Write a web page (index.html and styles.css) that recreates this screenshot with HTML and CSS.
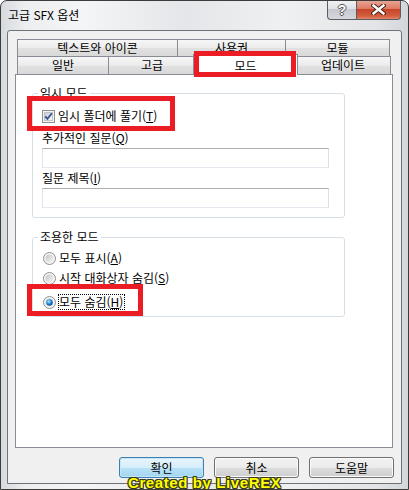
FILE: index.html
```html
<!DOCTYPE html>
<html lang="ko">
<head>
<meta charset="utf-8">
<title>고급 SFX 옵션</title>
<link rel="stylesheet" href="styles.css">
</head>
<body>
<div class="window">
  <div class="titlebar">
    <span class="title">고급 SFX 옵션</span>
    <div class="caption">
      <div class="cap-btn help"><span class="qmark">?</span></div>
      <div class="cap-btn close">
        <svg width="15" height="11" viewBox="0 0 15 11">
          <path d="M2.5 1.5 L12.5 9.5 M12.5 1.5 L2.5 9.5" stroke="#4a2317" stroke-width="4.4" stroke-linecap="square" fill="none"/>
          <path d="M2.5 1.5 L12.5 9.5 M12.5 1.5 L2.5 9.5" stroke="#ffffff" stroke-width="2.4" stroke-linecap="square" fill="none"/>
        </svg>
      </div>
    </div>
  </div>
  <div class="client">
    <div class="tabs">
      <div class="tab-row">
        <div class="tab t-text">텍스트와 아이콘</div>
        <div class="tab t-lic">사용권</div>
        <div class="tab t-mod">모듈</div>
      </div>
      <div class="tab-row row2">
        <div class="tab t-gen">일반</div>
        <div class="tab t-adv">고급</div>
        <div class="tab t-mode sel">모드</div>
        <div class="tab t-upd">업데이트</div>
      </div>
    </div>
    <div class="page">
      <fieldset class="group g1">
        <legend>임시 모드</legend>
        <div class="row check-row">
          <svg class="box" width="13" height="13" viewBox="0 0 13 13">
            <defs><linearGradient id="cbg" x1="0" y1="0" x2="1" y2="1"><stop offset="0" stop-color="#c6cbd2"/><stop offset="1" stop-color="#f7f7f7"/></linearGradient></defs>
            <rect x="0.5" y="0.5" width="12" height="12" fill="#f4f4f4" stroke="#8e8f8f"/>
            <rect x="2.5" y="2.5" width="8" height="8" fill="url(#cbg)" stroke="#bfc4ca"/>
            <path d="M3.2 6.3 L5.4 8.9 L9.9 3.2" fill="none" stroke="#3a5490" stroke-width="1.8"/>
          </svg>
          <span>임시 폴더에 풀기(<u>T</u>)</span>
        </div>
        <div class="row lbl l1">추가적인 질문(<u>Q</u>)</div>
        <div class="input"></div>
        <div class="row lbl l2">질문 제목(<u>I</u>)</div>
        <div class="input"></div>
      </fieldset>
      <fieldset class="group g2">
        <legend>조용한 모드</legend>
        <div class="row radio-row r1">
          <svg class="box" width="13" height="13" viewBox="0 0 13 13">
            <defs><linearGradient id="rg1" x1="0" y1="0" x2="1" y2="1"><stop offset="0" stop-color="#c4c4c4"/><stop offset="1" stop-color="#f6f6f6"/></linearGradient></defs>
            <circle cx="6.5" cy="6.5" r="6" fill="#f5f5f5" stroke="#8e8f8f"/>
            <circle cx="6.5" cy="6.5" r="4" fill="url(#rg1)"/>
          </svg>
          <span>모두 표시(<u>A</u>)</span>
        </div>
        <div class="row radio-row r2">
          <svg class="box" width="13" height="13" viewBox="0 0 13 13">
            <defs><linearGradient id="rg2" x1="0" y1="0" x2="1" y2="1"><stop offset="0" stop-color="#c4c4c4"/><stop offset="1" stop-color="#f6f6f6"/></linearGradient></defs>
            <circle cx="6.5" cy="6.5" r="6" fill="#f5f5f5" stroke="#8e8f8f"/>
            <circle cx="6.5" cy="6.5" r="4" fill="url(#rg2)"/>
          </svg>
          <span>시작 대화상자 숨김(<u>S</u>)</span>
        </div>
        <div class="row radio-row r3">
          <svg class="box" width="13" height="13" viewBox="0 0 13 13">
            <defs>
              <linearGradient id="rg3" x1="0" y1="0" x2="1" y2="1"><stop offset="0" stop-color="#c4c4c4"/><stop offset="1" stop-color="#f6f6f6"/></linearGradient>
              <radialGradient id="rd3" cx="0.4" cy="0.35" r="0.7"><stop offset="0" stop-color="#b4efff"/><stop offset="0.5" stop-color="#2b8fe2"/><stop offset="1" stop-color="#0d3c7c"/></radialGradient>
            </defs>
            <circle cx="6.5" cy="6.5" r="6" fill="#f5f5f5" stroke="#8e8f8f"/>
            <circle cx="6.5" cy="6.5" r="4" fill="url(#rg3)"/>
            <circle cx="6.5" cy="6.5" r="3.2" fill="url(#rd3)"/>
          </svg>
          <span class="focus">모두 숨김(<u>H</u>)</span>
        </div>
      </fieldset>
    </div>
    <div class="buttons">
      <div class="btn default">확인</div>
      <div class="btn">취소</div>
      <div class="btn">도움말</div>
    </div>
  </div>
  <div class="mark m-tab"></div>
  <div class="mark m-check"></div>
  <div class="mark m-radio"></div>
  <div class="watermark">Created by LiveREX</div>
</div>
</body>
</html>
```
FILE: styles.css
```css
* { box-sizing: border-box; }
html, body { margin: 0; padding: 0; }
body {
  width: 409px;
  height: 490px;
  overflow: hidden;
  background: #ffffff;
  font-family: "Noto Sans CJK KR", "Noto Sans", sans-serif;
  font-size: 12px;
  color: #000;
}
.window {
  position: relative;
  width: 409px;
  height: 490px;
  border: 1px solid #3c3c3c;
  border-radius: 7px 7px 0 0;
  background: linear-gradient(to right, #d6dade 0%, #eceef0 6%, #f4f5f6 20%, #e4e6e9 45%, #eef0f1 70%, #e2e4e7 92%, #d3d6da 100%);
  display: flex;
  flex-direction: column;
  padding: 0 6px 5px 6px;
  overflow: hidden;
}
.titlebar {
  height: 29px;
  display: flex;
  justify-content: space-between;
  align-items: flex-start;
  flex: none;
}
.title {
  margin: 7px 0 0 1px;
  line-height: 14px;
  font-size: 12px;
  color: #000;
}
.caption {
  display: flex;
  margin-top: -1px;
  margin-right: 1px;
}
.cap-btn {
  height: 20px;
  display: flex;
  align-items: center;
  justify-content: center;
  border: 1px solid #5b5e63;
  border-top: none;
}
.help {
  width: 29px;
  border-right: none;
  border-radius: 0 0 0 4px;
  background: linear-gradient(#f2f3f5, #dfe2e6 45%, #c6cad0 50%, #d5d9de);
}
.qmark {
  font-family: "Liberation Sans", sans-serif;
  font-weight: bold;
  font-size: 14px;
  line-height: 14px;
  color: #fff;
  text-shadow: 1px 0 0 #555, -1px 0 0 #555, 0 1px 0 #555, 0 -1px 0 #555;
}
.close {
  width: 45px;
  border-radius: 0 0 4px 0;
  background: linear-gradient(#e9a99b, #dd7b63 45%, #c8452a 50%, #d35f3f 85%, #e4866b);
}
.client {
  height: 454px;
  flex: none;
  border: 1px solid #6f7278;
  border-radius: 3px 3px 0 0;
  background: #f0f0f0;
  padding: 8px 8px 0 7px;
  display: flex;
  flex-direction: column;
}
.tabs { margin-left: 2px; }
.tab-row { display: flex; }
.tab {
  height: 17px;
  border: 1px solid #898c95;
  border-bottom: none;
  background: linear-gradient(#f6f6f6, #ebebeb 50%, #e1e1e1 51%, #d9d9d9);
  text-align: center;
  line-height: 15px;
  margin-left: -1px;
  white-space: nowrap;
}
.tab-row > .tab:first-child { margin-left: 0; }
.row2 .tab { height: 18px; }
.t-text { width: 161px; }
.t-lic { width: 109px; }
.t-mod { width: 105px; }
.t-gen { width: 92px; }
.t-adv { width: 88px; }
.t-upd { width: 96px; }
.tab.sel {
  width: 105px;
  height: 21px;
  margin: -2px -2px -1px -3px;
  background: #fff;
  position: relative;
  z-index: 2;
  line-height: 17px;
  padding-top: 2px;
}
.page {
  width: 378px;
  height: 374px;
  flex: none;
  border: 1px solid #898c95;
  background: #fff;
}
.group {
  width: 313px;
  margin: 0 0 0 16px;
  border: 1px solid #d5dfe5;
  border-radius: 3px;
  padding: 0 15px 9px 9px;
  min-width: 0;
}
.group legend {
  line-height: 15px;
  padding: 0 2px 2px 2px;
  margin-left: -4px;
}
.g1 { margin-top: 10px; }
.g2 { margin-top: 11px; padding-bottom: 6px; }
.row {
  display: flex;
  align-items: center;
  height: 14px;
  line-height: 14px;
  white-space: nowrap;
}
.row .box { flex: none; }
.check-row { margin-top: 7px; gap: 3px; }
.l1 { margin-top: 8px; }
.l2 { margin-top: 3px; }
.input {
  width: 287px;
  height: 20px;
  margin-top: 3px;
  background: #fff;
  border: 1px solid;
  border-color: #abadb3 #dbdfe6 #e3e9ef #e2e3ea;
}
.radio-row { gap: 3px; padding-left: 1px; }
.r1 { margin-top: 5px; }
.r2 { margin-top: 6px; }
.r3 { margin-top: 9px; height: 16px; gap: 2px; }
.focus {
  border: 1px dotted #000;
  line-height: 14px;
  padding: 0 1px 0 0;
}
.buttons {
  display: flex;
  justify-content: flex-end;
  gap: 10px;
  margin-top: 9px;
  margin-right: -1px;
}
.btn {
  width: 85px;
  height: 21px;
  border: 1px solid #707070;
  border-radius: 3px;
  background: linear-gradient(#f2f2f2, #ebebeb 50%, #dddddd 51%, #cfcfcf);
  box-shadow: inset 0 0 0 1px #fbfbfb;
  display: flex;
  align-items: center;
  justify-content: center;
  line-height: 14px;
}
.btn.default {
  border-color: #3c7fb1;
  background: linear-gradient(#e8f5fc, #d5eefb 50%, #b8e1f7 51%, #a4d6f2);
  box-shadow: inset 0 0 0 1px #c6e6f8;
}
.mark {
  position: absolute;
  border: 5px solid #ec1c24;
  z-index: 5;
}
.m-tab { left: 193px; top: 50px; width: 102px; height: 26px; }
.m-check { left: 26px; top: 95px; width: 148px; height: 35px; }
.m-radio { left: 26px; top: 283px; width: 116px; height: 32px; }
.watermark {
  position: absolute;
  left: 127px;
  top: 474px;
  z-index: 6;
  font-family: "Liberation Sans", sans-serif;
  font-weight: bold;
  font-size: 15px;
  line-height: 15px;
  letter-spacing: 0.6px;
  color: #ffff00;
  white-space: nowrap;
  text-shadow: 1px 0 0 #3a3a1a, -1px 0 0 #3a3a1a, 0 1px 0 #3a3a1a, 0 -1px 0 #3a3a1a, 1px 1px 0 #3a3a1a, -1px -1px 0 #3a3a1a, 1px -1px 0 #3a3a1a, -1px 1px 0 #3a3a1a;
}
```
